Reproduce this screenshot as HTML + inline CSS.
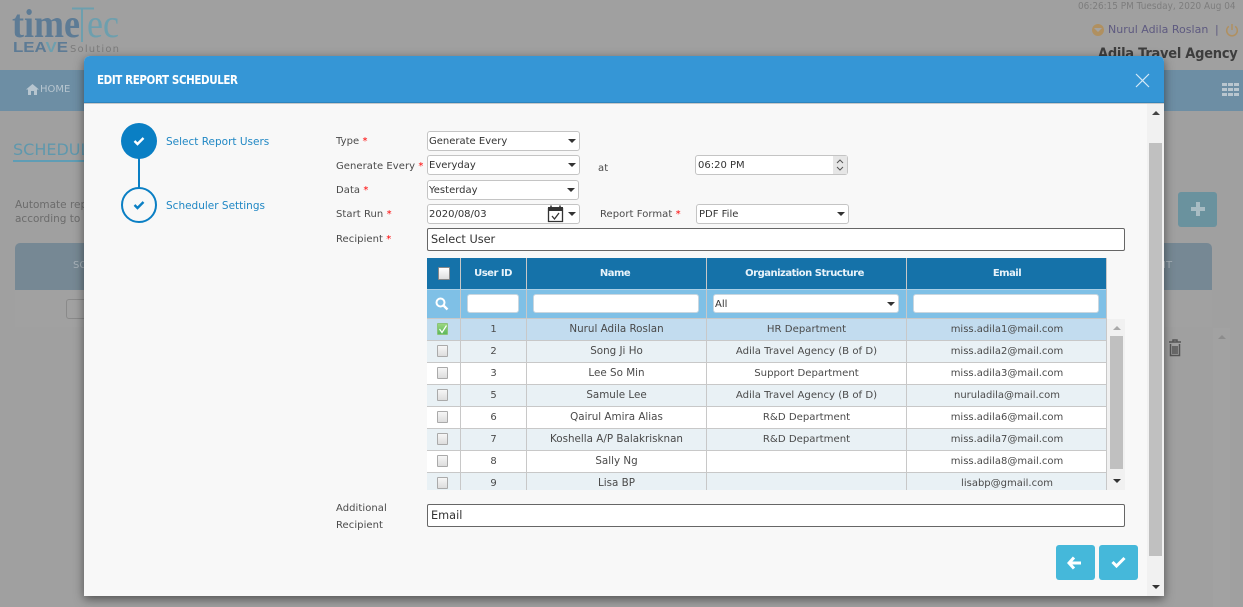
<!DOCTYPE html>
<html><head><meta charset="utf-8"><style>
*{box-sizing:border-box}
html,body{margin:0;padding:0;width:1243px;height:607px;overflow:hidden;background:#a0a0a0}
body{position:relative;font-family:"DejaVu Sans","Liberation Sans",sans-serif;font-size:10px;color:#444}
.a{position:absolute;white-space:nowrap}
.lbl{position:absolute;left:336px;color:#4a4a4a;white-space:nowrap;line-height:14px;margin-top:1px;letter-spacing:.06px}
.lbl b{color:#f00;font-weight:normal}
.sel{position:absolute;background:#fff;border:1px solid #c4c4c4;border-radius:3px;height:20px;line-height:20px;padding-left:1px;color:#333;white-space:nowrap}
.sel i,.ar{position:absolute;width:0;height:0;border-left:4px solid transparent;border-right:4px solid transparent;border-top:4px solid #333}
.sel i{right:3px;top:7px}
.inp{position:absolute;background:#fff;border:1px solid #666;border-radius:2px;height:23px;left:427px;width:698px;font-size:11.3px;line-height:22px;padding-left:3px;color:#333}
.r{position:absolute;left:427px;width:680px;height:22px;border-bottom:1px solid #c8c8c8;line-height:21px;color:#4a4a4a}
.r span{position:absolute;top:0;text-align:center;white-space:nowrap}
.c0{left:0;width:33px}.c1{left:34px;width:65px}.c2{left:100px;width:179px;font-size:10.35px}.c3{left:280px;width:199px;font-size:10.15px}.c4{left:480px;width:200px}
.o{background:#e9f1f5}.w{background:#fff}
.cb{position:absolute;left:10px;top:4px;width:11px;height:12px;border:1px solid #aaa;border-radius:1px;background:linear-gradient(#f6f6f6,#ddd)}
.vl{position:absolute;width:1px;background:#c8c8c8}
.fi{position:absolute;background:#fff;border:1px solid #c9d6df;border-radius:3px;top:294px;height:19px}
.th{position:absolute;top:266px;text-align:center;color:#e8f3fa;font-weight:bold;line-height:16px;letter-spacing:-.5px;white-space:nowrap}
</style></head><body>

<!-- background page -->
<svg class="a" style="left:0;top:0" width="130" height="60">
<text x="12" y="37" font-family="Liberation Serif" font-weight="bold" font-size="40" fill="#5d7b95" textLength="68" lengthAdjust="spacingAndGlyphs">time</text>
<path d="M72 8.500h22M82 8v34" stroke="#6d9fae" stroke-width="2" fill="none"/>
<text x="87" y="37" font-family="Liberation Serif" font-size="40" fill="#6d9fae" textLength="32" lengthAdjust="spacingAndGlyphs">ec</text>
<text x="13" y="52" font-family="Liberation Sans" font-weight="bold" font-size="15" fill="#5d7b95" textLength="55" lengthAdjust="spacingAndGlyphs">LEA<tspan fill="#6d9fae">V</tspan>E</text>
<text x="70" y="52" font-family="DejaVu Sans" font-size="10" fill="#7b7b7b" textLength="49" lengthAdjust="spacing">Solution</text>
</svg>
<div class="a" style="left:1078px;top:0;font-size:10px;color:#7d7d7d;line-height:13px;transform:scaleX(.89);transform-origin:0 0">06:26:15 PM Tuesday, 2020 Aug 04</div>
<div class="a" style="left:1092px;top:24px;width:12px;height:12px;border-radius:50%;background:#b09060"></div>
<div class="ar" style="left:1094px;top:28px;border-top-color:#a3a3a3"></div>
<div class="a" style="left:1108px;top:22px;font-size:11px;color:#5e5a80;line-height:15px">Nurul Adila Roslan</div>
<div class="a" style="left:1215px;top:22px;font-size:11px;color:#5e5a80;line-height:15px">|</div>
<svg class="a" style="left:1225px;top:23px" width="14" height="14"><path d="M3.800 3.300a5.300 5.300 0 1 0 6.400 0M7 1v6" fill="none" stroke="#b09060" stroke-width="1.500"/></svg>
<div class="a" style="left:1098px;top:45px;font:bold 14.5px 'DejaVu Sans',sans-serif;color:#3d3d3d;line-height:18px;letter-spacing:-.3px;transform:scaleX(.9);transform-origin:0 0">Adila Travel Agency</div>

<div class="a" style="left:0;top:70px;width:1243px;height:41px;background:#6d8ea4"></div>
<div class="a" style="left:40px;top:83px;font-size:10px;color:#b7c5cf;line-height:14px">HOME</div>
<svg class="a" style="left:26px;top:84px" width="13" height="11" viewBox="0 0 13 11"><path d="M6.500 0L0 5.500h2V11h3V7h3v4h3V5.500h2z" fill="#b7c5cf"/></svg>
<svg class="a" style="left:1222px;top:83px" width="17" height="13"><path d="M0 0h5v3H0zM6 0h5v3H6zM12 0h5v3h-5zM0 5h5v3H0zM6 5h5v3H6zM12 5h5v3h-5zM0 10h5v3H0zM6 10h5v3H6zM12 10h5v3h-5z" fill="#b9c6cf"/></svg>
<div class="a" style="left:13px;top:140px;font-size:16px;color:#5f98ad;line-height:20px">SCHEDULE</div>
<div class="a" style="left:13px;top:160px;width:71px;height:2px;background:#5f9db5"></div>
<div class="a" style="left:15px;top:198px;font-size:10.5px;color:#6c6c6c;line-height:14px">Automate rep<br>according to</div>
<div class="a" style="left:1178px;top:192px;width:39px;height:35px;background:#6a929e;border-radius:3px"></div>
<svg class="a" style="left:1191px;top:202px" width="14" height="14"><path d="M5 0h4v5h5v4H9v5H5V9H0V5h5z" fill="#a8bcc3"/></svg>
<div class="a" style="left:15px;top:243px;width:1197px;height:47px;background:#768894;border-radius:5px 5px 0 0"></div>
<div class="a" style="left:73px;top:259px;font-size:10px;color:#a8b2b9;line-height:14px">SC</div>
<div class="a" style="left:1163px;top:259px;font-size:10px;color:#a8b2b9;line-height:14px">IT</div>
<div class="a" style="left:15px;top:290px;width:1197px;height:37px;background:#a1a1a1"></div>
<div class="a" style="left:66px;top:299px;width:30px;height:20px;border:1px solid #8a8a8a;border-radius:3px"></div>
<div class="a" style="left:1213px;top:328px;width:17px;height:279px;background:#a2a2a2"></div>
<div class="ar" style="left:1218px;top:335px;border-top:0;border-bottom:4px solid #8c8c8c"></div>
<svg class="a" style="left:1168px;top:339px" width="15" height="18"><path d="M1 3h12M5 3V1h4v2M2.500 5v11.500h9V5M5 7v8M7 7v8M9 7v8" fill="none" stroke="#555" stroke-width="1.500"/></svg>

<!-- modal -->
<div class="a" style="left:84px;top:56px;width:1080px;height:540px;background:#f8f8f8;border-radius:6px 6px 0 0;box-shadow:0 3px 10px rgba(0,0,0,.5)"></div>
<div class="a" style="left:84px;top:56px;width:1080px;height:47px;background:#3596d6;border-radius:6px 6px 0 0;border-bottom:1px solid #2d84bd"></div>
<div class="a" style="left:84px;top:103px;width:1080px;height:1px;background:#c9c9c9"></div>
<div class="a" style="left:97px;top:72px;font-size:12px;font-weight:bold;color:#fff;line-height:16px;letter-spacing:-.45px;transform:scaleX(.86);transform-origin:0 0">EDIT REPORT SCHEDULER</div>
<svg class="a" style="left:1135px;top:73px" width="15" height="15"><path d="M1 1l13 13M14 1L1 14" stroke="#d4e9f7" stroke-width="1.200" fill="none"/></svg>

<!-- outer scrollbar -->
<div class="a" style="left:1147px;top:104px;width:17px;height:492px;background:#f1f1f1"></div>
<div class="a" style="left:1149px;top:143px;width:13px;height:413px;background:#c0c0c0"></div>
<div class="ar" style="left:1152px;top:111px;border-top:0;border-bottom:4px solid #444"></div>
<div class="ar" style="left:1152px;top:585px"></div>

<!-- stepper -->
<div class="a" style="left:138px;top:158px;width:2px;height:30px;background:#0a7fc4"></div>
<div class="a" style="left:121px;top:123px;width:36px;height:36px;border-radius:50%;background:#0a7fc4"></div>
<div class="a" style="left:121px;top:187px;width:36px;height:36px;border-radius:50%;background:#f8f8f8;border:2px solid #0a7fc4"></div>
<svg class="a" style="left:133px;top:136px" width="12" height="10"><path d="M1.500 5l3 3 6-6" stroke="#fff" stroke-width="2.400" fill="none"/></svg>
<svg class="a" style="left:133px;top:200px" width="12" height="10"><path d="M1.500 5l3 3 6-6" stroke="#0a7fc4" stroke-width="2.400" fill="none"/></svg>
<div class="a" style="left:166px;top:135px;font-size:10.5px;color:#1f87c4;line-height:14px">Select Report Users</div>
<div class="a" style="left:166px;top:199px;font-size:10.5px;color:#1f87c4;line-height:14px">Scheduler Settings</div>

<!-- form -->
<div class="lbl" style="top:134px">Type <b>*</b></div>
<div class="lbl" style="top:159px">Generate Every <b>*</b></div>
<div class="lbl" style="top:183px">Data <b>*</b></div>
<div class="lbl" style="top:207px">Start Run <b>*</b></div>
<div class="lbl" style="top:232px">Recipient <b>*</b></div>
<div class="lbl" style="top:499px;line-height:17px">Additional<br>Recipient</div>
<div class="lbl" style="left:598px;top:161px">at</div>
<div class="lbl" style="left:600px;top:207px">Report Format <b>*</b></div>

<div class="sel" style="left:427px;top:131px;width:153px">Generate Every<i></i></div>
<div class="sel" style="left:427px;top:155px;width:153px">Everyday<i></i></div>
<div class="sel" style="left:427px;top:180px;width:152px">Yesterday<i></i></div>
<div class="sel" style="left:427px;top:204px;width:153px">2020/08/03<i></i>
<svg style="position:absolute;left:119px;top:0" width="17" height="18"><path d="M1.500 3.500h14v13h-14z" fill="#fff" stroke="#333" stroke-width="1.300"/><path d="M1 2h15v4H1z" fill="#333"/><path d="M4 .5v3M13 .5v3" stroke="#333" stroke-width="1.500"/><path d="M5 11l2.500 3 4.500-6" stroke="#333" stroke-width="1.300" fill="none"/></svg></div>
<div class="sel" style="left:695px;top:155px;width:153px;padding-left:2px">06:20 PM
<div style="position:absolute;right:0;top:0;width:14px;height:18px;background:#e6e6e6"></div>
<svg style="position:absolute;right:2px;top:2px" width="10" height="14"><path d="M2 5l3-3 3 3M2 9l3 3 3-3" stroke="#555" fill="none"/></svg></div>
<div class="sel" style="left:696px;top:204px;width:153px;padding-left:2px">PDF File<i></i></div>
<div class="inp" style="top:228px">Select User</div>
<div class="inp" style="top:504px">Email</div>

<!-- table -->
<div class="a" style="left:427px;top:258px;width:680px;height:31px;background:#1572a9"></div>
<div class="a" style="left:427px;top:289px;width:680px;height:29px;background:#7fc0e6;border-top:1px solid #a9cfe6"></div>
<div class="a" style="left:438px;top:267px;width:12px;height:13px;background:linear-gradient(#fff,#ddd);border:1px solid #888;border-radius:1px"></div>
<div class="th" style="left:460px;width:66px">User ID</div>
<div class="th" style="left:527px;width:176px">Name</div>
<div class="th" style="left:707px;width:195px">Organization Structure</div>
<div class="th" style="left:907px;width:200px">Email</div>
<svg class="a" style="left:435px;top:297px" width="14" height="14"><circle cx="5.500" cy="5.500" r="4" fill="none" stroke="#fff" stroke-width="2"/><path d="M8.500 8.500l4 4" stroke="#fff" stroke-width="2.400"/></svg>
<div class="fi" style="left:467px;width:52px"></div>
<div class="fi" style="left:533px;width:166px"></div>
<div class="sel" style="left:713px;top:294px;width:186px;height:19px;line-height:19px;border-color:#c9d6df">All<i></i></div>
<div class="fi" style="left:913px;width:186px"></div>

<div style="position:absolute;left:0;top:0;width:1243px;height:490px;overflow:hidden">
<div class="r" style="top:319px;background:#c2dcef"><span class="c1">1</span><span class="c2">Nurul Adila Roslan</span><span class="c3">HR Department</span><span class="c4">miss.adila1@mail.com</span>
<div class="cb" style="background:linear-gradient(#9ad77f,#5cb85c);border-color:#8cc37a;height:12px"></div><svg style="position:absolute;left:11px;top:5px" width="10" height="10"><path d="M1.500 5l2.500 3.500 4.500-7" stroke="#fff" fill="none" stroke-width="1.200"/></svg></div>
<div class="r o" style="top:341px"><div class="cb"></div><span class="c1">2</span><span class="c2">Song Ji Ho</span><span class="c3">Adila Travel Agency (B of D)</span><span class="c4">miss.adila2@mail.com</span></div>
<div class="r w" style="top:363px"><div class="cb"></div><span class="c1">3</span><span class="c2">Lee So Min</span><span class="c3">Support Department</span><span class="c4">miss.adila3@mail.com</span></div>
<div class="r o" style="top:385px"><div class="cb"></div><span class="c1">5</span><span class="c2">Samule Lee</span><span class="c3">Adila Travel Agency (B of D)</span><span class="c4">nuruladila@mail.com</span></div>
<div class="r w" style="top:407px"><div class="cb"></div><span class="c1">6</span><span class="c2">Qairul Amira Alias</span><span class="c3">R&amp;D Department</span><span class="c4">miss.adila6@mail.com</span></div>
<div class="r o" style="top:429px"><div class="cb"></div><span class="c1">7</span><span class="c2">Koshella A/P Balakrisknan</span><span class="c3">R&amp;D Department</span><span class="c4">miss.adila7@mail.com</span></div>
<div class="r w" style="top:451px"><div class="cb"></div><span class="c1">8</span><span class="c2">Sally Ng</span><span class="c3"></span><span class="c4">miss.adila8@mail.com</span></div>
<div class="r o" style="top:473px"><div class="cb"></div><span class="c1">9</span><span class="c2">Lisa BP</span><span class="c3"></span><span class="c4">lisabp@gmail.com</span></div>
</div>
<div class="vl" style="left:460px;top:258px;height:232px"></div>
<div class="vl" style="left:526px;top:258px;height:232px"></div>
<div class="vl" style="left:706px;top:258px;height:232px"></div>
<div class="vl" style="left:906px;top:258px;height:232px"></div>
<div class="vl" style="left:1106px;top:258px;height:232px"></div>
<div class="a" style="left:427px;top:318px;width:680px;height:1px;background:#c8c8c8"></div>

<!-- inner scrollbar -->
<div class="a" style="left:1107px;top:319px;width:18px;height:171px;background:#f1f1f1"></div>
<div class="a" style="left:1110px;top:336px;width:13px;height:133px;background:#c0c0c0"></div>
<div class="ar" style="left:1113px;top:326px;border-top:0;border-bottom:4px solid #aaa"></div>
<div class="ar" style="left:1113px;top:479px"></div>

<!-- buttons -->
<div class="a" style="left:1056px;top:545px;width:39px;height:35px;background:#45b8da;border-radius:3px"></div>
<div class="a" style="left:1099px;top:545px;width:39px;height:35px;background:#45b8da;border-radius:3px"></div>
<svg class="a" style="left:1067px;top:556px" width="15" height="14"><path d="M7 1.500L2 7l5 5.500M3 7h11" stroke="#fff" stroke-width="3" fill="none"/></svg>
<svg class="a" style="left:1111px;top:556px" width="15" height="12"><path d="M1.500 6l4 4 8-8" stroke="#fff" stroke-width="3" fill="none"/></svg>
</body></html>
